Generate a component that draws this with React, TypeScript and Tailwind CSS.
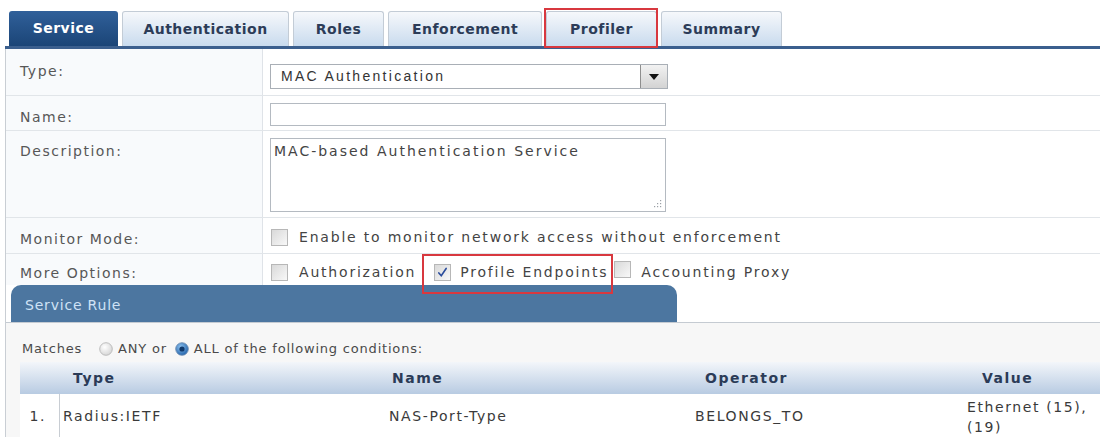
import React from 'react';

type Tab = { label: string; width: string; active?: boolean; marked?: boolean };

const tabs: Tab[] = [
  { label: 'Service', width: 'w-[109px]', active: true },
  { label: 'Authentication', width: 'w-[167px]' },
  { label: 'Roles', width: 'w-[91px]' },
  { label: 'Enforcement', width: 'w-[154px]' },
  { label: 'Profiler', width: 'w-[111px]', marked: true },
  { label: 'Summary', width: 'w-[121px]' },
];

const Checkbox = ({ checked = false }: { checked?: boolean }) => (
  <span className="inline-flex h-[17px] w-[17px] shrink-0 items-center justify-center border border-[#b7b7b7] bg-linear-to-br from-[#d9d9d9] to-[#f8f8f8]">
    {checked && (
      <svg viewBox="0 0 16 16" className="h-[13px] w-[13px]">
        <path d="M3.5 8.5 L6.5 12 L12.5 3" fill="none" stroke="#2a4c9c" strokeWidth="2" strokeLinecap="round" />
      </svg>
    )}
  </span>
);

const Radio = ({ checked = false }: { checked?: boolean }) => (
  <svg viewBox="0 0 14 14" className="h-[14px] w-[14px] shrink-0">
    <defs>
      <radialGradient id={checked ? 'radOn' : 'radOff'} cx="40%" cy="35%" r="70%">
        <stop offset="0%" stopColor={checked ? '#8fc3f0' : '#ffffff'} />
        <stop offset="100%" stopColor={checked ? '#1d5fa8' : '#d4d4d4'} />
      </radialGradient>
    </defs>
    <circle cx="7" cy="7" r="6.3" fill={`url(#${checked ? 'radOn' : 'radOff'})`} stroke={checked ? '#6f8fb3' : '#b8b8b8'} strokeWidth="0.9" />
    {checked && <circle cx="7" cy="7" r="2.6" fill="#10396b" />}
  </svg>
);

const Label = ({ children, className = '' }: { children: React.ReactNode; className?: string }) => (
  <div className={`border-r border-[#dfe3e8] bg-[#f8fafc] pl-[14px] text-[14px] leading-[18px] tracking-[1.5px] text-[#575757] ${className}`}>
    {children}
  </div>
);

export default function App() {
  return (
    <div className="h-[437px] w-[1103px] overflow-hidden bg-white font-['DejaVu_Sans',sans-serif]">
      {/* tab strip */}
      <div className="ml-[5px] mr-[3px] flex h-[49px] items-end gap-[4px] border-b-[3px] border-[#3b5f8e] pl-[4px]">
        {tabs.map((t) => (
          <div
            key={t.label}
            className={`relative flex h-[35px] items-center justify-center rounded-t-[3px] text-[14px] font-bold tracking-[0.5px] ${t.width} ${
              t.active
                ? 'bg-linear-to-b from-[#30609a] to-[#1b4577] text-white'
                : 'border border-b-0 border-[#c3ccd6] bg-linear-to-b from-[#f6f8fb] to-[#c9dbee] text-[#2c3c58]'
            }`}
          >
            {t.label}
            {t.marked && <span className="absolute -top-[4px] -left-[3px] -right-[2px] -bottom-[2px] border-2 border-[#d8383f]" />}
          </div>
        ))}
      </div>

      <div className="ml-[5px] mr-[3px] border-l border-[#c9ced4]">
        {/* Type */}
        <div className="grid h-[47px] grid-cols-[257px_1fr] border-b border-[#e1e5e9]">
          <Label className="pt-[13px]">Type:</Label>
          <div className="pl-[7px] pt-[15px]">
            <div className="flex h-[25px] w-[398px] items-center border border-[#a9afb6] bg-white">
              <span className="flex-1 pl-[10px] font-['Liberation_Sans',sans-serif] text-[14px] tracking-[2.3px] text-[#333]">MAC Authentication</span>
              <span className="flex h-[23px] w-[27px] items-center justify-center border-l border-[#8e8e8e] bg-linear-to-b from-[#f2f2f2] to-[#d3d3d3]">
                <svg viewBox="0 0 10 6" className="h-[6px] w-[10px]">
                  <path d="M0 0 H10 L5 6 Z" fill="#111" />
                </svg>
              </span>
            </div>
          </div>
        </div>

        {/* Name */}
        <div className="grid h-[35px] grid-cols-[257px_1fr] border-b border-[#e1e5e9]">
          <Label className="pt-[12px]">Name:</Label>
          <div className="pl-[7px] pt-[7px]">
            <div className="h-[23px] w-[396px] border border-[#b4bac1] bg-white" />
          </div>
        </div>

        {/* Description */}
        <div className="grid h-[87px] grid-cols-[257px_1fr] border-b border-[#e1e5e9]">
          <Label className="pt-[11px]">Description:</Label>
          <div className="pl-[7px] pt-[7px]">
            <div className="relative h-[74px] w-[396px] border border-[#b4bac1] bg-white pl-[3px] pt-[3px] text-[14px] leading-[18px] tracking-[2px] text-[#444]">
              MAC-based Authentication Service
              <svg viewBox="0 0 8 8" className="absolute bottom-[3px] right-[3px] h-[8px] w-[8px]">
                <g fill="#9aa0a6">
                  <rect x="6" y="0" width="1.2" height="1.2" />
                  <rect x="3" y="3" width="1.2" height="1.2" />
                  <rect x="6" y="3" width="1.2" height="1.2" />
                  <rect x="0" y="6" width="1.2" height="1.2" />
                  <rect x="3" y="6" width="1.2" height="1.2" />
                  <rect x="6" y="6" width="1.2" height="1.2" />
                </g>
              </svg>
            </div>
          </div>
        </div>

        {/* Monitor Mode */}
        <div className="grid h-[36px] grid-cols-[257px_1fr] border-b border-[#e1e5e9]">
          <Label className="flex items-center pt-[6px]">Monitor Mode:</Label>
          <div className="flex items-center gap-[11px] pl-[8px] pt-[4px] text-[14px] tracking-[1.8px] text-[#444]">
            <Checkbox />
            <span>Enable to monitor network access without enforcement</span>
          </div>
        </div>

        {/* More Options */}
        <div className="grid h-[31px] grid-cols-[257px_1fr]">
          <Label className="flex items-center pt-[6px]">More Options:</Label>
          <div className="flex items-center pl-[8px] pt-[5px] text-[14px] tracking-[1.8px] text-[#444]">
            <Checkbox />
            <span className="ml-[11px]">Authorization</span>
            <span className="relative ml-[18px] flex items-center">
              <Checkbox checked />
              <span className="ml-[9px]">Profile Endpoints</span>
              <span className="absolute -left-[12px] -right-[5px] -top-[8px] -bottom-[11px] border-2 border-[#d8383f]" />
            </span>
            <span className="ml-[6px]">
              <Checkbox />
            </span>
            <span className="ml-[10px]">Accounting Proxy</span>
          </div>
        </div>

        {/* Service Rule */}
        <div className="flex h-[38px] border-b border-[#c5cbd2]">
          <div className="ml-[5px] flex w-[666px] items-center rounded-t-[10px] bg-[#4c76a0] pl-[14px] pt-[3px] text-[14px] tracking-[0.8px] text-[#cfe2f6]">
            Service Rule
          </div>
        </div>

        <div className="bg-[#f7f7f7]">
          <div className="flex h-[39px] items-center gap-[5px] pl-[16px] pt-[12px] text-[13px] tracking-[0.8px] text-[#4a4a4a]">
            <span>Matches</span>
            <span className="ml-[12px]"><Radio /></span>
            <span>ANY or</span>
            <span className="ml-[3px]"><Radio checked /></span>
            <span>ALL of the following conditions:</span>
          </div>

          <div className="ml-[14px]">
            <div className="grid h-[32px] grid-cols-[40px_320px_310px_270px_1fr] items-center bg-linear-to-b from-[#f3f6fa] to-[#b8cbe2] text-[14px] font-bold tracking-[1.5px] text-[#2b3b57]">
              <span />
              <span className="pl-[13px]">Type</span>
              <span className="pl-[12px]">Name</span>
              <span className="pl-[15px]">Operator</span>
              <span className="pl-[22px]">Value</span>
            </div>
            <div className="grid h-[44px] grid-cols-[40px_320px_310px_270px_1fr] items-center bg-white text-[14px] leading-[20px] tracking-[1.6px] text-[#3a3a3a]">
              <span className="flex h-full items-center justify-end border-r border-[#c8cdd3] pr-[13px]">1.</span>
              <span className="pl-[3px]">Radius:IETF</span>
              <span className="pl-[9px]">NAS-Port-Type</span>
              <span className="pl-[5px]">BELONGS_TO</span>
              <span className="whitespace-nowrap pl-[7px] pt-[2px]">
                <span className="block">Ethernet (15),</span>
                <span className="block">(19)</span>
              </span>
            </div>
          </div>
        </div>
      </div>
    </div>
  );
}
